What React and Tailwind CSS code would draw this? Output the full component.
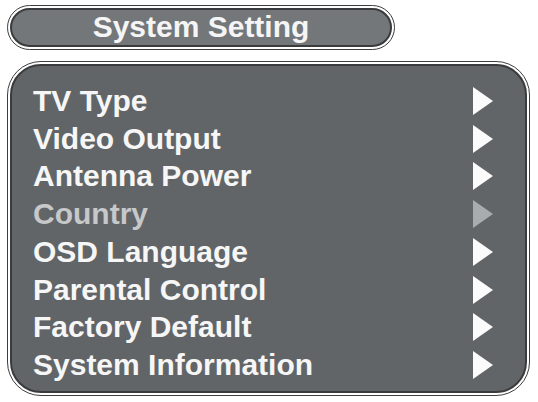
import React from 'react';

const items = [
  { label: 'TV Type' },
  { label: 'Video Output' },
  { label: 'Antenna Power' },
  { label: 'Country', dim: true },
  { label: 'OSD Language' },
  { label: 'Parental Control' },
  { label: 'Factory Default' },
  { label: 'System Information' },
];

const Arrow = ({ dim }) => (
  <svg width="20" height="28" viewBox="0 0 20 28">
    <polygon points="0,0 20,14 0,28" fill={dim ? '#a9acae' : '#fbfbfb'} />
  </svg>
);

const App = () => {
  return (
    <div className="w-[538px] h-[402px] bg-white pt-[5px] pl-[7px] font-['Liberation_Sans',Arial,sans-serif]">
      {/* Title pill */}
      <div className="w-[388px] h-[45px] rounded-full border-[1.5px] border-[#3c3d3e] bg-white p-[2px]">
        <div className="h-full rounded-full border-2 border-[#3a3b3c] bg-[#747779] flex items-center justify-center">
          <span className="text-[30px] font-bold text-[#f5f5f5] leading-none pb-[2px]">System Setting</span>
        </div>
      </div>

      {/* Menu panel */}
      <div className="mt-[11px] w-[523px] h-[335px] rounded-[34px] border-[1.5px] border-[#3c3d3e] bg-white p-[2px]">
        <div className="h-full rounded-[31px] border-2 border-[#3a3b3c] bg-[#626567] pt-[16px] pl-[21px] pr-[32px]">
          {items.map((it) => (
            <div key={it.label} className="h-[37.75px] flex items-center justify-between">
              <span
                className={`text-[30px] font-bold leading-none ${it.dim ? 'text-[#c6c8ca]' : 'text-[#f6f6f6]'}`}
              >
                {it.label}
              </span>
              <Arrow dim={it.dim} />
            </div>
          ))}
        </div>
      </div>
    </div>
  );
};

export default App;
